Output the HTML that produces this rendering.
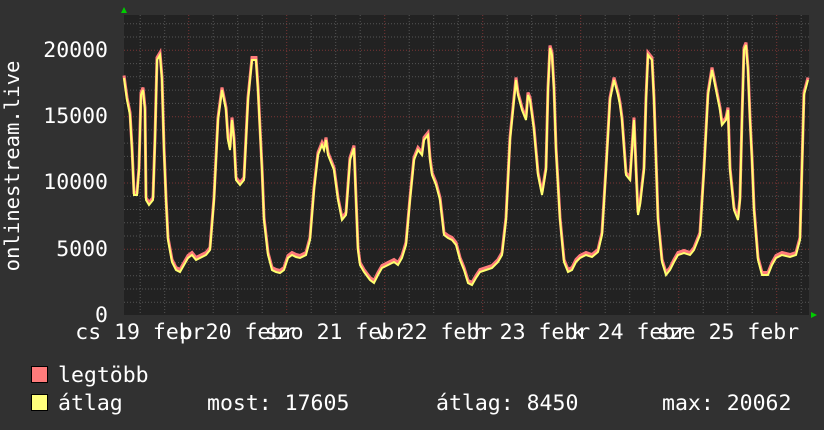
<!DOCTYPE html>
<html><head><meta charset="utf-8"><style>
html,body{margin:0;padding:0;background:#313131;}
svg{display:block}
text{font-family:"DejaVu Sans Mono","Liberation Mono",monospace;fill:#fff;font-size:21.5px}
</style></head><body>
<svg width="824" height="430" viewBox="0 0 824 430" xmlns="http://www.w3.org/2000/svg">
<rect width="824" height="430" fill="#313131"/>
<rect x="124" y="15" width="685" height="300" fill="#222"/>
<g stroke="#555" stroke-width="1" stroke-dasharray="1,2">
<line x1="124" x2="809" y1="302.3" y2="302.3"/><line x1="124" x2="809" y1="289" y2="289"/><line x1="124" x2="809" y1="275.8" y2="275.8"/><line x1="124" x2="809" y1="262.5" y2="262.5"/>
<line x1="124" x2="809" y1="236" y2="236"/><line x1="124" x2="809" y1="222.7" y2="222.7"/><line x1="124" x2="809" y1="209.5" y2="209.5"/><line x1="124" x2="809" y1="196.2" y2="196.2"/>
<line x1="124" x2="809" y1="169.7" y2="169.7"/><line x1="124" x2="809" y1="156.4" y2="156.4"/><line x1="124" x2="809" y1="143.1" y2="143.1"/><line x1="124" x2="809" y1="129.9" y2="129.9"/>
<line x1="124" x2="809" y1="103.4" y2="103.4"/><line x1="124" x2="809" y1="90.1" y2="90.1"/><line x1="124" x2="809" y1="76.8" y2="76.8"/><line x1="124" x2="809" y1="63.6" y2="63.6"/>
<line x1="124" x2="809" y1="37" y2="37"/><line x1="124" x2="809" y1="23.8" y2="23.8"/>
<line y1="15" y2="315" x1="140.2" x2="140.2"/><line y1="15" y2="315" x1="164.7" x2="164.7"/><line y1="15" y2="315" x1="213.2" x2="213.2"/><line y1="15" y2="315" x1="237.7" x2="237.7"/><line y1="15" y2="315" x1="262.2" x2="262.2"/>
<line y1="15" y2="315" x1="311.2" x2="311.2"/><line y1="15" y2="315" x1="335.7" x2="335.7"/><line y1="15" y2="315" x1="360.2" x2="360.2"/>
<line y1="15" y2="315" x1="409.2" x2="409.2"/><line y1="15" y2="315" x1="433.7" x2="433.7"/><line y1="15" y2="315" x1="458.2" x2="458.2"/>
<line y1="15" y2="315" x1="507.2" x2="507.2"/><line y1="15" y2="315" x1="531.7" x2="531.7"/><line y1="15" y2="315" x1="556.2" x2="556.2"/>
<line y1="15" y2="315" x1="605.2" x2="605.2"/><line y1="15" y2="315" x1="629.7" x2="629.7"/><line y1="15" y2="315" x1="654.2" x2="654.2"/>
<line y1="15" y2="315" x1="703.2" x2="703.2"/><line y1="15" y2="315" x1="727.7" x2="727.7"/><line y1="15" y2="315" x1="752.2" x2="752.2"/>
<line y1="15" y2="315" x1="801.2" x2="801.2"/>
</g>
<g stroke="#7a3434" stroke-width="1" stroke-dasharray="1,2">
<line x1="124" x2="809" y1="50.3" y2="50.3"/><line x1="124" x2="809" y1="116.7" y2="116.7"/><line x1="124" x2="809" y1="183" y2="183"/><line x1="124" x2="809" y1="249.3" y2="249.3"/>
<line y1="15" y2="315" x1="188.7" x2="188.7"/><line y1="15" y2="315" x1="286.7" x2="286.7"/><line y1="15" y2="315" x1="384.7" x2="384.7"/><line y1="15" y2="315" x1="482.7" x2="482.7"/><line y1="15" y2="315" x1="580.7" x2="580.7"/><line y1="15" y2="315" x1="678.7" x2="678.7"/><line y1="15" y2="315" x1="776.7" x2="776.7"/>
</g>
<defs><polyline id="d" fill="none" points="124,78 127,100 130,115 132,150 134,195 137,195 139,170 141,95 143,90 145,110 146,200 149,205 153,200 155,140 157,60 160,55 162,80 164,150 166,200 168,240 172,262 176,270 180,272 184,265 188,258 192,255 196,260 200,258 206,255 210,250 214,200 218,120 222,90 226,110 228,140 230,150 232,120 234,140 236,180 240,185 244,180 246,140 248,100 252,60 256,60 258,90 260,130 262,170 264,220 268,255 272,270 276,272 280,273 284,270 288,258 292,255 296,257 300,258 306,255 310,240 314,190 318,155 322,145 324,150 326,140 328,155 330,160 334,170 338,200 342,220 346,215 350,160 354,148 356,200 358,250 360,265 364,272 370,280 374,283 378,275 382,268 388,265 394,262 398,265 402,258 406,245 410,200 414,160 418,150 422,155 424,140 428,135 430,160 432,175 436,185 440,200 444,235 448,238 452,240 456,245 460,260 464,270 468,283 472,285 476,278 480,272 486,270 492,268 498,262 502,255 506,220 510,140 514,100 516,80 518,95 522,110 526,120 528,95 530,100 534,130 538,175 542,195 546,170 548,90 550,48 552,55 554,90 556,150 560,220 564,262 568,272 572,270 576,262 580,258 586,255 592,257 598,252 602,235 606,170 610,100 614,80 618,95 620,105 622,120 626,175 630,180 632,150 634,120 636,170 638,215 640,205 644,170 646,100 648,55 652,60 654,100 656,160 658,220 662,262 666,275 670,270 674,262 678,255 684,253 690,255 694,250 700,235 704,170 708,95 712,70 716,90 720,110 722,125 726,120 728,110 730,170 734,210 738,220 740,200 742,120 744,50 746,45 748,70 750,120 752,160 754,210 758,260 762,275 768,275 772,265 776,258 782,255 790,257 796,255 800,240 804,95 808,80"/></defs>
<use href="#d" stroke="#ff7b7b" stroke-width="3" transform="translate(0,-2.5)"/>
<use href="#d" stroke="#ffff70" stroke-width="2"/>
<polygon points="121,13 127,13 124,7" fill="#0c0"/>
<polygon points="811,312 811,318 817,315" fill="#0c0"/>
<g text-anchor="end" style="font-size:20.6px"><text x="108" y="57">20000</text><text x="108" y="123">15000</text><text x="108" y="189">10000</text><text x="108" y="256">5000</text><text x="108" y="322">0</text></g>
<text transform="translate(19,166) rotate(-90)" text-anchor="middle" style="font-size:20.6px">onlinestream.live</text>
<g text-anchor="middle">
<text x="140" y="339">cs 19 febr</text><text x="238" y="339">p 20 febr</text><text x="336" y="339">szo 21 febr</text><text x="434" y="339">v 22 febr</text><text x="532" y="339">h 23 febr</text><text x="630" y="339">k 24 febr</text><text x="728" y="339">sze 25 febr</text>
</g>
<rect x="31.5" y="366.5" width="16" height="16" fill="#ff7b7b" stroke="#000"/>
<rect x="31.5" y="394.5" width="16" height="16" fill="#ffff7b" stroke="#000"/>
<text x="58" y="382">legtöbb</text>
<text x="58" y="410">átlag</text>
<text x="207" y="410">most: 17605</text>
<text x="436" y="410">átlag: 8450</text>
<text x="662" y="410">max: 20062</text>
</svg>
</body></html>
